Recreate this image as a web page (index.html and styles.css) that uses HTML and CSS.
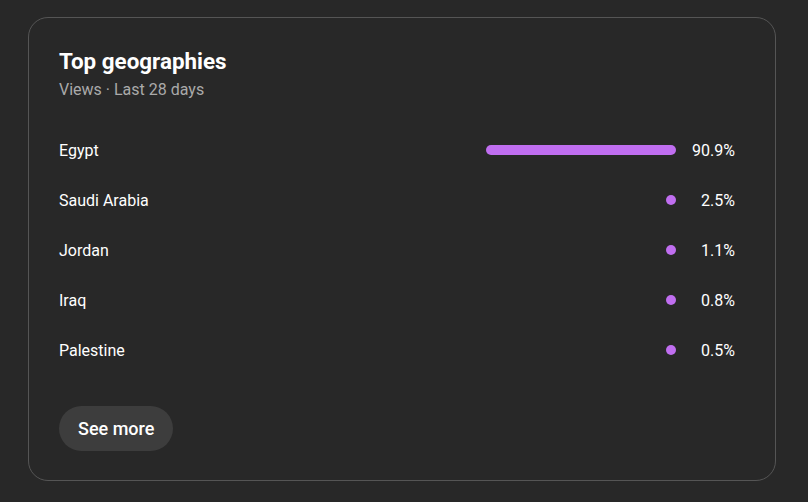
FILE: index.html
```html
<!DOCTYPE html>
<html>
<head>
<meta charset="utf-8">
<link rel="stylesheet" href="styles.css">
</head>
<body>
<div class="card">
  <h2 class="title">Top geographies</h2>
  <div class="subtitle">Views · Last 28 days</div>
  <div class="rows">
    <div class="row"><span class="name">Egypt</span><div class="track"><div class="bar" style="width:190px"></div></div><span class="pct">90.9%</span></div>
    <div class="row"><span class="name">Saudi Arabia</span><div class="track"><div class="bar" style="width:10px"></div></div><span class="pct">2.5%</span></div>
    <div class="row"><span class="name">Jordan</span><div class="track"><div class="bar" style="width:10px"></div></div><span class="pct">1.1%</span></div>
    <div class="row"><span class="name">Iraq</span><div class="track"><div class="bar" style="width:10px"></div></div><span class="pct">0.8%</span></div>
    <div class="row"><span class="name">Palestine</span><div class="track"><div class="bar" style="width:10px"></div></div><span class="pct">0.5%</span></div>
  </div>
  <button class="more">See more</button>
</div>
</body>
</html>
```
FILE: styles.css
```css
html, body {
  margin: 0;
  padding: 0;
  background: #282828;
  font-family: Roboto, "Liberation Sans", sans-serif;
  color: #fff;
}
body {
  padding: 17px 32px 20px 28px;
}
.card {
  border: 1px solid #555;
  border-radius: 20px;
  padding: 28px 40px 30px 30px;
  height: 404px;
}
.title {
  margin: 0;
  font-size: 22.4px;
  font-weight: 700;
  line-height: 30px;
}
.subtitle {
  font-size: 16px;
  color: #aaa;
  line-height: 20px;
  margin-top: 4px;
}
.rows {
  margin-top: 25px;
  display: flex;
  flex-direction: column;
}
.row {
  display: flex;
  align-items: center;
  height: 50px;
  font-size: 16px;
}
.name {
  flex: 1;
}
.track {
  display: flex;
  justify-content: flex-end;
  width: 210px;
}
.bar {
  height: 10px;
  border-radius: 5px;
  background: #c06ef0;
}
.pct {
  width: 59px;
  text-align: right;
}
.more {
  margin-top: 31px;
  height: 45px;
  padding: 0 19px;
  border: none;
  border-radius: 23px;
  background: #3d3d3d;
  color: #fff;
  font-family: Roboto, "Liberation Sans", sans-serif;
  font-size: 18px;
  font-weight: 500;
}
```
